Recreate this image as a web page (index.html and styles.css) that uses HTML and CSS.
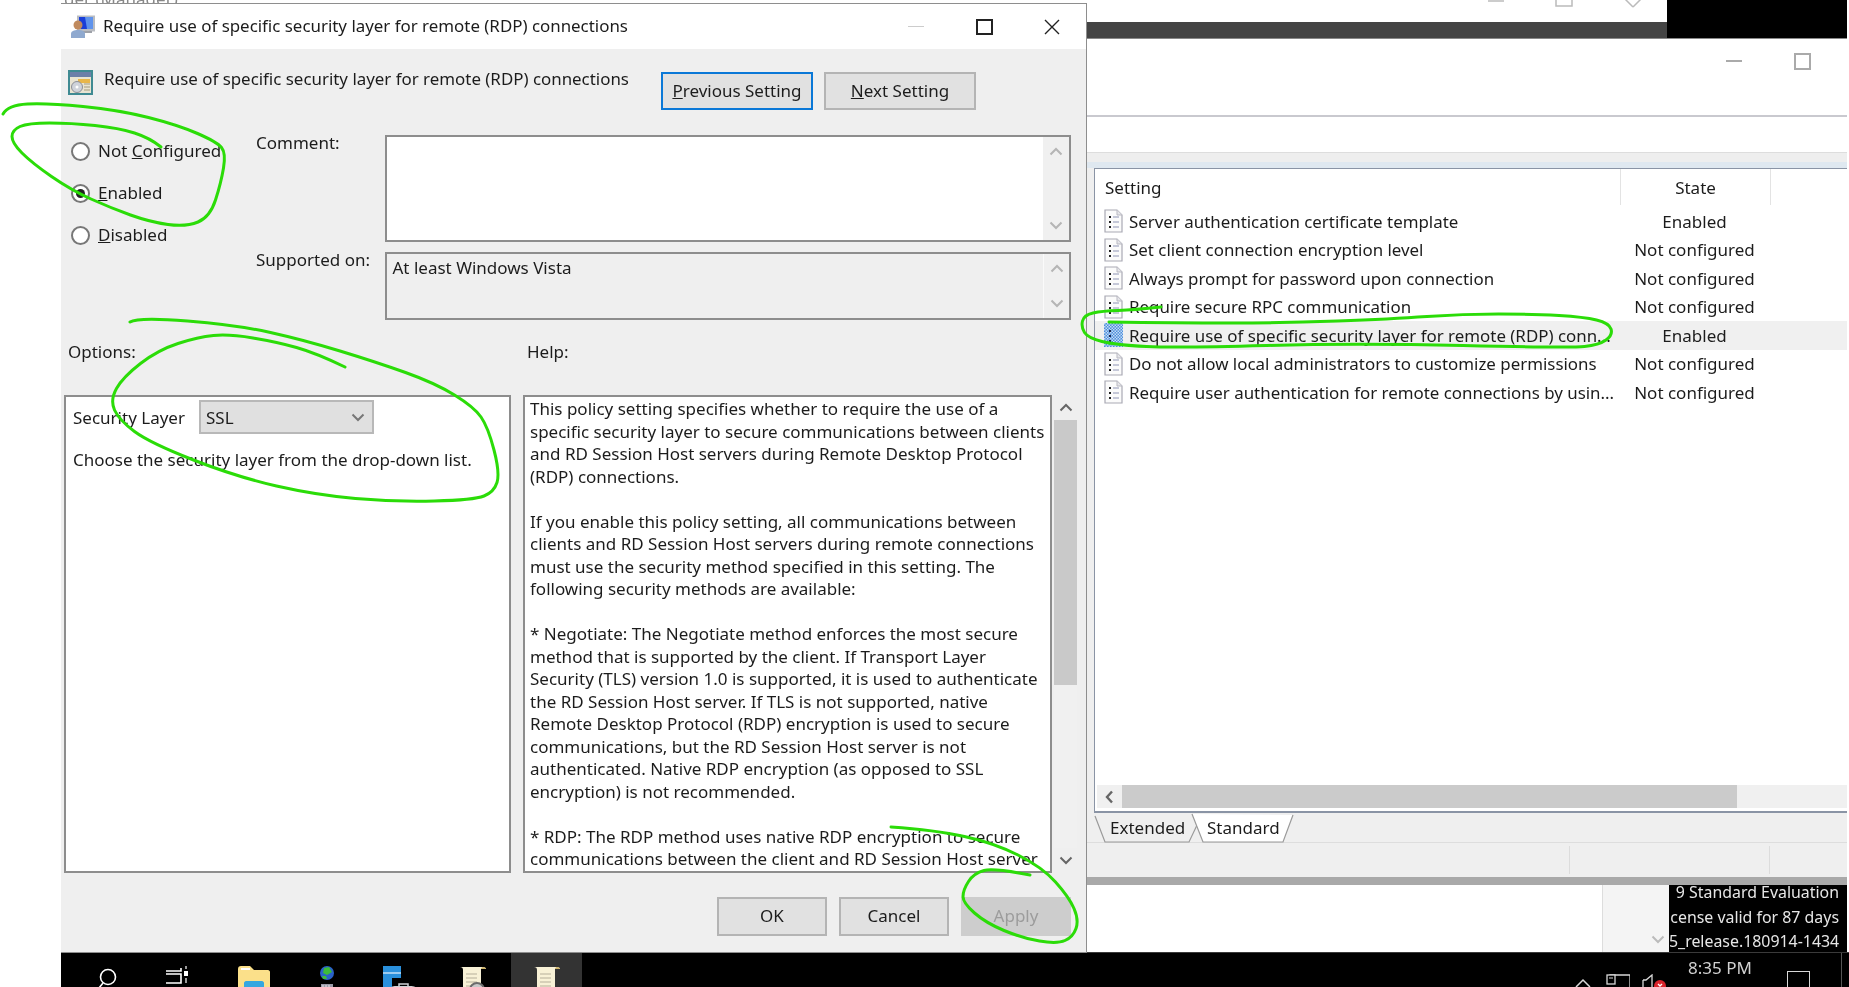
FILE: index.html
```html
<!DOCTYPE html>
<html lang="en">

<head>
    <meta charset="UTF-8">
    <title>Require use of specific security layer for remote (RDP) connections</title>
    <link rel="stylesheet" href="styles.css">
</head>

<body>
    <svg class="defs" width="0" height="0">
        <defs>
            <pattern id="dither" width="3" height="3" patternUnits="userSpaceOnUse">
                <rect width="3" height="3" fill="#4d8fdc"/>
                <rect width="1.5" height="1.5" fill="#c4dbf5"/>
                <rect x="1.5" y="1.5" width="1.5" height="1.5" fill="#c4dbf5"/>
            </pattern>
            <symbol id="doc" viewBox="0 0 19 24">
                <path d="M1 1H13L18 6V23H1Z" fill="#fbfbfb" stroke="#a9a9b4" stroke-width="1.2"/>
                <path d="M13 1V6H18" fill="#e6e6ea" stroke="#b9b9c2"/>
                <path d="M5 7h2v2H5zM5 12h2v2H5zM5 17h2v2H5z" fill="#222"/>
                <path d="M9 8h6M9 13h6M9 18h6" stroke="#8f95b5" stroke-width="1.2"/>
            </symbol>
            <symbol id="chev-up" viewBox="0 0 14 9">
                <path d="M1.5 7.5L7 2L12.5 7.5" fill="none" stroke="currentColor" stroke-width="2"/>
            </symbol>
            <symbol id="chev-down" viewBox="0 0 14 9">
                <path d="M1.5 1.5L7 7L12.5 1.5" fill="none" stroke="currentColor" stroke-width="2"/>
            </symbol>
            <symbol id="scroll" viewBox="0 0 28 24">
                <path d="M1 1H24C26 1 27 2 27 3H22V24H4V4C4 2 3 1 1 1Z" fill="#f8f1d6"/>
                <path d="M24 1C26 1 27 2 27 3H22C22 2 23 1 24 1Z" fill="#cdb36a"/>
                <path d="M7 8H18M7 12H18M7 16H18M7 20H18" stroke="#b5b09a" stroke-width="1.2"/>
            </symbol>
        </defs>
    </svg>

    <div class="desktop">
        <div class="old-title">ger (Manager)</div>

        <div class="back-window">
            <div class="back-caption">
                <svg class="back-glyph" width="170" height="22" viewBox="0 0 170 22">
                    <path d="M0 1H16" stroke="#bbb" stroke-width="1.5"/>
                    <path d="M68 -6H84V6H68Z" fill="none" stroke="#bbb" stroke-width="1.5"/>
                    <path d="M137 -1L145 7M153 -1L145 7" fill="none" stroke="#bbb" stroke-width="1.5"/>
                </svg>
            </div>
            <div class="back-bar"></div>
        </div>
        <div class="back-black"></div>

        <div class="mmc">
            <div class="mmc-caption">
                <span class="mmc-min"></span>
                <span class="mmc-max"></span>
            </div>
            <div class="mmc-toolbar"></div>
            <div class="mmc-band"></div>
            <div class="mmc-frame">
                <div class="list">
                    <div class="list-head">
                        <div class="col-name">Setting</div>
                        <div class="col-state">State</div>
                    </div>
                    <div class="list-rows">
                        <div class="row">
                            <svg class="row-icon"><use href="#doc"/></svg>
                            <div class="col-text">Server authentication certificate template</div>
                            <div class="col-state">Enabled</div>
                        </div>
                        <div class="row">
                            <svg class="row-icon"><use href="#doc"/></svg>
                            <div class="col-text">Set client connection encryption level</div>
                            <div class="col-state">Not configured</div>
                        </div>
                        <div class="row">
                            <svg class="row-icon"><use href="#doc"/></svg>
                            <div class="col-text">Always prompt for password upon connection</div>
                            <div class="col-state">Not configured</div>
                        </div>
                        <div class="row">
                            <svg class="row-icon"><use href="#doc"/></svg>
                            <div class="col-text">Require secure RPC communication</div>
                            <div class="col-state">Not configured</div>
                        </div>
                        <div class="row row-selected">
                            <svg class="row-icon" viewBox="0 0 19 24">
                                <rect width="19" height="24" fill="url(#dither)"/>
                                <path d="M5 7h2v2H5zM5 12h2v2H5zM5 17h2v2H5z" fill="#1c2a55"/>
                            </svg>
                            <div class="col-text">Require use of specific security layer for remote (RDP) conn...</div>
                            <div class="col-state">Enabled</div>
                        </div>
                        <div class="row">
                            <svg class="row-icon"><use href="#doc"/></svg>
                            <div class="col-text">Do not allow local administrators to customize permissions</div>
                            <div class="col-state">Not configured</div>
                        </div>
                        <div class="row">
                            <svg class="row-icon"><use href="#doc"/></svg>
                            <div class="col-text">Require user authentication for remote connections by usin...</div>
                            <div class="col-state">Not configured</div>
                        </div>
                    </div>
                    <div class="hscroll">
                        <span class="hscroll-left">
                            <svg width="9" height="14" viewBox="0 0 9 14"><path d="M7 1.5L2 7L7 12.5" fill="none" stroke="#666" stroke-width="2.4"/></svg>
                        </span>
                        <span class="hscroll-thumb"></span>
                    </div>
                </div>
            </div>
            <div class="tabs">
                <svg class="tabs-bg" width="210" height="30" viewBox="0 0 210 30">
                    <path d="M8 3L18 29H102L111 10" fill="none" stroke="#9a9a9a" stroke-width="1.2"/>
                    <path d="M105 1L116 29H196L206 2" fill="#fff" stroke="#9a9a9a" stroke-width="1.2"/>
                </svg>
                <span class="tab tab-extended">Extended</span>
                <span class="tab tab-standard">Standard</span>
            </div>
            <div class="status">
                <span class="status-cell status-main"></span>
                <span class="status-cell status-mid"></span>
                <span class="status-cell"></span>
            </div>
        </div>

        <div class="under">
            <div class="under-white"></div>
            <div class="under-strip">
                <svg class="under-chev" width="14" height="9"><use href="#chev-down"/></svg>
            </div>
            <div class="watermark">
                <div class="watermark-first">9 Standard Evaluation</div>
                <div>cense valid for 87 days</div>
                <div>5_release.180914-1434</div>
            </div>
        </div>

        <div class="taskbar">
            <div class="task-slot">
                <svg width="24" height="24" viewBox="0 0 24 24">
                    <circle cx="12" cy="11" r="7.5" fill="none" stroke="#fff" stroke-width="1.6"/>
                    <path d="M7 17L3 22" stroke="#fff" stroke-width="1.6"/>
                </svg>
            </div>
            <div class="task-slot">
                <svg width="30" height="24" viewBox="4 0 30 24">
                    <path d="M3 2V5H19V2M3 8H19V17H3Z" fill="none" stroke="#fff" stroke-width="1.6"/>
                    <rect x="22" y="5" width="4" height="5" fill="#fff"/>
                    <path d="M24 0V3M24 12V17" stroke="#fff" stroke-width="1.2"/>
                </svg>
            </div>
            <div class="task-slot">
                <svg width="32" height="24" viewBox="0 0 32 24">
                    <path d="M0 3C0 1 1 0 3 0H12L16 4H30C31 4 32 5 32 6V24H0Z" fill="#fbe08a"/>
                    <path d="M3 2H12V4H3Z" fill="#fff"/>
                    <path d="M6 17C6 16 7 15 8 15H24C25 15 26 16 26 17V24H6Z" fill="#35a7e0"/>
                </svg>
            </div>
            <div class="task-slot">
                <svg width="24" height="24" viewBox="0 0 24 24">
                    <circle cx="12" cy="7" r="7" fill="#2a62c9"/>
                    <path d="M9 2L14 1L17 6L12 9L8 7ZM7 10L11 10L12 13L8 13Z" fill="#3dbb3a"/>
                    <rect x="6" y="18" width="12" height="6" fill="#9a9aa8"/>
                    <path d="M8 19V22M11 19V22M14 19V22" stroke="#e4e4e8"/>
                </svg>
            </div>
            <div class="task-slot">
                <svg width="36" height="24" viewBox="0 0 36 24">
                    <path d="M1 0H19V12H10V24H1Z" fill="#2a90dc"/>
                    <path d="M1 7H19" stroke="#cfe6f7" stroke-width="1.4"/>
                    <path d="M8 23C8 21 11 20 14 20H28C32 20 35 21 35 24H8Z" fill="#cfd2d6"/>
                    <path d="M17 20V18H26V20" fill="none" stroke="#cfd2d6" stroke-width="1.5"/>
                </svg>
            </div>
            <div class="task-slot">
                <svg width="28" height="24"><use href="#scroll"/></svg>
                <svg class="script-lens" width="18" height="6" viewBox="0 0 18 6">
                    <circle cx="9" cy="9" r="7" fill="#c9c9c9" stroke="#6c6c6c" stroke-width="2"/>
                </svg>
            </div>
            <div class="task-slot task-active">
                <svg width="28" height="24"><use href="#scroll"/></svg>
            </div>
            <div class="tray">
                <div class="tray-slot tray-chevron">
                    <svg width="16" height="10" viewBox="0 0 16 10"><path d="M1 9L8 2L15 9" fill="none" stroke="#d8d8d8" stroke-width="1.5"/></svg>
                </div>
                <div class="tray-slot tray-net">
                    <svg width="24" height="14" viewBox="0 0 24 14">
                        <path d="M4 5V1H24V14H6" fill="none" stroke="#d8d8d8" stroke-width="1.3"/>
                        <rect x="1" y="1" width="8" height="9" fill="#000" stroke="#d8d8d8" stroke-width="1.3"/>
                        <path d="M3 4H7" stroke="#d8d8d8"/>
                    </svg>
                </div>
                <div class="tray-slot tray-sound">
                    <svg width="26" height="14" viewBox="0 0 26 14">
                        <path d="M2 6H5L11 1V14" fill="none" stroke="#d8d8d8" stroke-width="1.3"/>
                        <path d="M2 6V14" stroke="#d8d8d8" stroke-width="1.3"/>
                        <circle cx="19" cy="12" r="6" fill="#d9232b"/>
                        <path d="M17 10L21 14M21 10L17 14" stroke="#fff" stroke-width="1.4"/>
                    </svg>
                </div>
                <div class="tray-clock">8:35 PM</div>
                <div class="tray-slot tray-notify"><span class="notify-box"></span></div>
                <div class="tray-edge"></div>
            </div>
        </div>

        <div class="dialog">
            <div class="titlebar">
                <svg class="title-icon" width="24" height="23" viewBox="0 0 24 23">
                    <rect x="6" y="0.5" width="18" height="16" fill="#b9bcc2"/>
                    <rect x="8" y="2" width="14" height="12" fill="#1a3ed8"/>
                    <path d="M14 2H22V14H16Z" fill="#5f93ec"/>
                    <rect x="11" y="16" width="10" height="2" fill="#9ea1a8"/>
                    <circle cx="7" cy="10" r="4.5" fill="#c08a5e"/>
                    <path d="M0 23V19C0 16 3 15 7 15C11 15 14 16 14 19V23Z" fill="#8fa9cf"/>
                </svg>
                <span class="title-text">Require use of specific security layer for remote (RDP) connections</span>
                <div class="caption-btns">
                    <span class="cap-btn"><span class="cap-min"></span></span>
                    <span class="cap-btn"><span class="cap-max"></span></span>
                    <span class="cap-btn">
                        <svg width="16" height="16" viewBox="0 0 16 16"><path d="M1 1L15 15M15 1L1 15" stroke="#222" stroke-width="1.4"/></svg>
                    </span>
                </div>
            </div>

            <div class="dlg-head">
                <svg class="policy-icon" width="25" height="25" viewBox="0 0 25 25">
                    <rect width="25" height="25" fill="#3f8a92"/>
                    <rect x="2" y="2" width="21" height="21" fill="#e9e4d2"/>
                    <rect x="2" y="2" width="21" height="5" fill="#6c7fa8"/>
                    <path d="M10 9H22V13H10Z" fill="#e8b64a"/>
                    <circle cx="9" cy="17" r="5.5" fill="#cfd3da" stroke="#8c8f96"/>
                    <circle cx="9" cy="17" r="1.5" fill="#fff"/>
                    <path d="M16 14H22M16 17H22M16 20H22" stroke="#a49b7c"/>
                </svg>
                <span class="head-text">Require use of specific security layer for remote (RDP) connections</span>
                <div class="nav-btns">
                    <span class="btn btn-nav btn-focus"><u>P</u>revious Setting</span>
                    <span class="btn btn-nav"><u>N</u>ext Setting</span>
                </div>
            </div>

            <div class="settings">
                <div class="radios">
                    <div class="radio-row"><span class="radio"></span><span>Not <u>C</u>onfigured</span></div>
                    <div class="radio-row"><span class="radio radio-on"></span><span><u>E</u>nabled</span></div>
                    <div class="radio-row"><span class="radio"></span><span><u>D</u>isabled</span></div>
                </div>
                <div class="field-label">Comment:</div>
                <div class="box box-comment">
                    <div class="box-text"></div>
                    <div class="box-scroll">
                        <svg width="14" height="9"><use href="#chev-up"/></svg>
                        <svg width="14" height="9"><use href="#chev-down"/></svg>
                    </div>
                </div>
                <div class="field-label">Supported on:</div>
                <div class="box box-supported">
                    <div class="box-text">At least Windows Vista</div>
                    <div class="box-scroll">
                        <svg width="14" height="9"><use href="#chev-up"/></svg>
                        <svg width="14" height="9"><use href="#chev-down"/></svg>
                    </div>
                </div>
            </div>

            <div class="panel-labels">
                <span class="label-options">Options:</span>
                <span class="label-help">Help:</span>
            </div>

            <div class="panels">
                <div class="options">
                    <div class="option-row">
                        <span class="option-label">Security Layer</span>
                        <span class="combo">
                            <span>SSL</span>
                            <svg width="14" height="9"><use href="#chev-down"/></svg>
                        </span>
                    </div>
                    <div class="option-note">Choose the security layer from the drop-down list.</div>
                </div>
                <div class="help">
                    This policy setting specifies whether to require the use of a<br>
                    specific security layer to secure communications between clients<br>
                    and RD Session Host servers during Remote Desktop Protocol<br>
                    (RDP) connections.<br>
                    <br>
                    If you enable this policy setting, all communications between<br>
                    clients and RD Session Host servers during remote connections<br>
                    must use the security method specified in this setting. The<br>
                    following security methods are available:<br>
                    <br>
                    * Negotiate: The Negotiate method enforces the most secure<br>
                    method that is supported by the client. If Transport Layer<br>
                    Security (TLS) version 1.0 is supported, it is used to authenticate<br>
                    the RD Session Host server. If TLS is not supported, native<br>
                    Remote Desktop Protocol (RDP) encryption is used to secure<br>
                    communications, but the RD Session Host server is not<br>
                    authenticated. Native RDP encryption (as opposed to SSL<br>
                    encryption) is not recommended.<br>
                    <br>
                    * RDP: The RDP method uses native RDP encryption to secure<br>
                    communications between the client and RD Session Host server
                </div>
                <div class="help-scroll">
                    <span class="help-arrow"><svg width="14" height="9"><use href="#chev-up"/></svg></span>
                    <span class="help-thumb"></span>
                    <span class="help-track"></span>
                    <span class="help-arrow"><svg width="14" height="9"><use href="#chev-down"/></svg></span>
                </div>
            </div>

            <div class="dlg-foot">
                <span class="btn btn-foot">OK</span>
                <span class="btn btn-foot">Cancel</span>
                <span class="btn btn-foot btn-disabled">Apply</span>
            </div>
        </div>

        <!-- green pen marks over the screenshot -->
        <svg class="ink" width="1849" height="987" viewBox="0 0 1849 987">
            <path d="M3,114 Q8,105 27.5,104 Q47,103 83,106.5 Q119,110 148.5,117.5 Q178,125 197.5,133.5 Q217,142 221.5,147.5 Q226,153 223.5,168 Q221,183 215.5,200 Q210,217 198,222 Q186,227 168,224.5 Q150,222 130.5,215 Q111,208 91,199 Q71,190 51.5,176.5 Q32,163 22,153 Q12,143 12,136.5 Q12,130 20,126.5 Q28,123 49.5,123 Q71,123 95,125.5 Q119,128 134.5,133 Q150,138 161,147"/>
            <path d="M130,322 Q138,317 187.5,321 Q237,325 270.5,332.5 Q304,340 340,351 Q376,362 405.5,372.5 Q435,383 454.5,395 Q474,407 481,417 Q488,427 494,450 Q500,473 497,482.5 Q494,492 484,496 Q474,500 434.5,501 Q395,502 355.5,498.5 Q316,495 276.5,486 Q237,477 193.5,460 Q150,443 134.5,431.5 Q119,420 114.5,410 Q110,400 116.5,388.5 Q123,377 140.5,363.5 Q158,350 178,343.5 Q198,337 213.5,335.5 Q229,334 253,338 Q277,342 296.5,347.5 Q316,353 345,367"/>
            <path d="M1161,307 Q1134,310 1118,310.5 Q1102,311 1093,313 Q1084,315 1082.5,321 Q1081,327 1084.5,332.5 Q1088,338 1102,341.5 Q1116,345 1146.5,346.5 Q1177,348 1266.5,345.5 Q1356,343 1463,345.5 Q1570,348 1584.5,346.5 Q1599,345 1606,340 Q1613,335 1611,329 Q1609,323 1596.5,320 Q1584,317 1559,315.5 Q1534,314 1498.5,314 Q1463,314 1427,316.5 Q1391,319 1337.5,321 Q1284,323 1230.5,323 Q1177,323 1109,322"/>
            <path d="M891,827 Q935,830 964.5,836.5 Q994,843 1018,855 Q1042,867 1055.5,882 Q1069,897 1074,908.5 Q1079,920 1076,928.5 Q1073,937 1065,940.5 Q1057,944 1039.5,941 Q1022,938 1004,930.5 Q986,923 974.5,913 Q963,903 963,896.5 Q963,890 968.5,881.5 Q974,873 984,870.5 Q994,868 1030,875"/>
        </svg>
    </div>
</body>

</html>
```

FILE: styles.css
```css
html,
body {
    margin: 0;
    padding: 0;
    background: #fff;
}

.defs {
    position: absolute;
}

.desktop {
    position: relative;
    width: 1849px;
    height: 987px;
    overflow: hidden;
    background: #fff;
    font-family: "Noto Sans", sans-serif;
    font-size: 17px;
    color: #1c1c1c;
    filter: blur(0.5px);
}

.old-title {
    position: absolute;
    left: 64px;
    top: -13px;
    font-size: 17px;
    color: #888;
}

/* windows behind the dialog */
.back-window {
    position: absolute;
    left: 1087px;
    top: 0;
    width: 580px;
}

.back-caption {
    height: 22px;
    background: #fff;
    display: flex;
    justify-content: flex-end;
    padding-right: 9px;
}

.back-bar {
    height: 16px;
    background: #444;
}

.back-black {
    position: absolute;
    left: 1667px;
    top: 0;
    width: 180px;
    height: 38px;
    background: #000;
}

.mmc {
    position: absolute;
    left: 1086px;
    top: 38px;
    width: 761px;
    height: 847px;
    box-sizing: border-box;
    border-top: 1px solid #888;
    border-left: 1px solid #888;
    display: flex;
    flex-direction: column;
    background: #fff;
}

.mmc-caption {
    height: 78px;
    box-sizing: border-box;
    border-bottom: 2px solid #c9c9cf;
    display: flex;
    justify-content: flex-end;
    align-items: flex-start;
    gap: 52px;
    padding: 14px 36px 0 0;
}

.mmc-min {
    width: 16px;
    height: 2px;
    margin-top: 7px;
    background: #aaa;
}

.mmc-max {
    width: 13px;
    height: 13px;
    border: 2px solid #aaa;
}

.mmc-toolbar {
    height: 35px;
}

.mmc-band {
    height: 16px;
    box-sizing: border-box;
    background: linear-gradient(#eee 60%, #dfe8f0 60%);
    border-top: 1px solid #ddd;
}

.mmc-frame {
    flex: 1;
    display: flex;
    background: #efefef;
    padding-left: 7px;
    min-height: 0;
}

.list {
    flex: 1;
    background: #fff;
    border-top: 1px solid #8a94a5;
    border-left: 1px solid #8a94a5;
    border-bottom: 2px solid #8a94a5;
    display: flex;
    flex-direction: column;
}

.list-head {
    height: 37px;
    display: flex;
    align-items: center;
    padding-bottom: 1px;
    box-sizing: border-box;
}

.col-name {
    width: 525px;
    box-sizing: border-box;
    padding-left: 10px;
    height: 36px;
    line-height: 38px;
}

.list-head .col-state {
    height: 36px;
    line-height: 38px;
    border-left: 1px solid #e3e3e3;
    border-right: 1px solid #e3e3e3;
}

.col-state {
    width: 149px;
    text-align: center;
}

.list-rows {
    flex: 1;
    padding-top: 1px;
}

.row {
    height: 28.5px;
    display: flex;
    align-items: center;
    white-space: nowrap;
}

.row-selected {
    background: #f0f0f0;
}

.row-icon {
    width: 19px;
    height: 24px;
    margin-left: 9px;
    margin-right: 6px;
    flex: none;
}

.col-text {
    width: 491px;
    flex: none;
    overflow: hidden;
    font-size: 16.9px;
}

.hscroll {
    height: 23px;
    display: flex;
    margin-bottom: 3px;
    background: #f0f0f0;
    margin-left: 2px;
}

.hscroll-left {
    width: 25px;
    display: flex;
    align-items: center;
    justify-content: center;
}

.hscroll-thumb {
    width: 615px;
    background: #cbcbcb;
}

.tabs {
    position: relative;
    height: 30px;
    box-sizing: border-box;
    background: #efefef;
    border-bottom: 1px solid #ddd;
    display: flex;
    align-items: center;
    padding-left: 23px;
}

.tabs-bg {
    position: absolute;
    left: 0;
    top: 0;
}

.tab {
    position: relative;
}

.tab-extended {
    width: 97px;
}

.status {
    height: 34px;
    background: #efefef;
    display: flex;
    padding: 3px 0;
    box-sizing: border-box;
}

.status-cell {
    flex: 1;
    border-left: 1px solid #dcdcdc;
}

.status-main {
    flex: none;
    width: 482px;
    border-left: none;
}

.status-mid {
    flex: none;
    width: 199px;
}

.mmc::after {
    content: "";
    height: 8px;
    background: #a9a9a9;
}

.under {
    position: absolute;
    left: 1087px;
    top: 885px;
    width: 760px;
    height: 67px;
    display: flex;
}

.under-white {
    flex: 1;
}

.under-strip {
    width: 67px;
    box-sizing: border-box;
    background: #f4f4f4;
    border-left: 1px solid #ddd;
    display: flex;
    justify-content: flex-end;
    align-items: flex-end;
    padding: 0 4px 8px 0;
    color: #bbb;
}

.watermark {
    width: 178px;
    height: 67px;
    box-sizing: border-box;
    background: #000;
    color: #e6e6e6;
    font-size: 15.9px;
    line-height: 24.5px;
    text-align: right;
    white-space: nowrap;
    padding-right: 8px;
}

.watermark-first {
    margin-top: -5px;
}

.taskbar {
    position: absolute;
    left: 61px;
    top: 952px;
    right: 0;
    height: 35px;
    background: #000;
    border-top: 1px solid #3a3a3a;
    box-sizing: border-box;
    display: flex;
    padding-left: 10px;
}

.task-slot {
    position: relative;
    width: 73px;
    height: 100%;
    display: flex;
    justify-content: center;
    padding-top: 13px;
    box-sizing: border-box;
}

.task-active {
    background: #333;
    width: 71px;
    margin-left: 2px;
}

.script-lens {
    position: absolute;
    left: 32px;
    bottom: 0;
}

.tray {
    margin-left: auto;
    display: flex;
    color: #d0d0d0;
}

.tray-slot {
    display: flex;
    justify-content: center;
    padding-top: 21px;
    box-sizing: border-box;
}

.tray-chevron {
    width: 35px;
    padding-top: 25px;
}

.tray-net {
    width: 36px;
}

.tray-sound {
    width: 36px;
}

.tray-clock {
    width: 96px;
    text-align: center;
    font-size: 17px;
    line-height: 30px;
}

.tray-notify {
    width: 60px;
    padding-top: 18px;
}

.notify-box {
    width: 21px;
    height: 30px;
    border: 1.5px solid #d8d8d8;
}

.tray-edge {
    width: 1px;
    margin-left: 13px;
    margin-right: 7px;
    background: #555;
}

/* the policy dialog */
.dialog {
    position: absolute;
    left: 61px;
    top: 3px;
    width: 1026px;
    height: 950px;
    box-sizing: border-box;
    border: 1px solid #8e8e8e;
    border-left: none;
    background: #efefef;
    display: flex;
    flex-direction: column;
}

.titlebar {
    height: 45px;
    flex: none;
    background: #fff;
    display: flex;
    align-items: center;
    padding-left: 10px;
}

.title-icon {
    margin-right: 8px;
}

.title-text {
    font-size: 16.9px;
    margin-top: -2px;
}

.caption-btns {
    margin-left: auto;
    display: flex;
}

.cap-btn {
    width: 68px;
    display: flex;
    justify-content: center;
    align-items: center;
    height: 30px;
}

.cap-min {
    width: 16px;
    height: 1.5px;
    background: #ccc;
}

.cap-max {
    width: 13px;
    height: 12px;
    border: 2px solid #222;
}

.dlg-head {
    height: 86px;
    flex: none;
    box-sizing: border-box;
    padding: 21px 110px 0 7px;
    display: flex;
    align-items: flex-start;
}

.policy-icon {
    margin-right: 11px;
}

.head-text {
    font-size: 16.9px;
    line-height: 17px;
}

.nav-btns {
    margin-left: auto;
    margin-top: 2px;
    display: flex;
    gap: 11px;
}

.btn {
    box-sizing: border-box;
    border: 2px solid #b4b4b4;
    background: #e1e1e1;
    display: flex;
    align-items: center;
    justify-content: center;
    padding-bottom: 2px;
}

.btn-nav {
    width: 152px;
    height: 38px;
}

.btn-focus {
    border-color: #0a78d7;
}

.settings {
    height: 185px;
    flex: none;
    box-sizing: border-box;
    padding-right: 15px;
    display: grid;
    grid-template-columns: 195px 128.5px 1fr;
    grid-template-rows: 107px 68px;
    row-gap: 10px;
}

.radios {
    grid-row: 1 / 3;
    display: flex;
    flex-direction: column;
    gap: 22px;
    padding: 6px 0 0 10px;
}

.radio-row {
    height: 20px;
    line-height: 20px;
    display: flex;
    align-items: center;
    gap: 8px;
    white-space: nowrap;
}

.radio {
    width: 19px;
    height: 19px;
    box-sizing: border-box;
    border: 2px solid #777;
    border-radius: 50%;
    background: #fff;
    display: flex;
    align-items: center;
    justify-content: center;
}

.radio-on::after {
    content: "";
    width: 9px;
    height: 9px;
    border-radius: 50%;
    background: #222;
}

.field-label {
    line-height: 16px;
}

.box {
    box-sizing: border-box;
    border: 2px solid #8d8d8d;
    display: flex;
}

.box-comment {
    background: #fff;
}

.box-supported {
    background: #efefef;
}

.box-text {
    flex: 1;
    padding: 5px 0 0 6px;
    line-height: 18px;
}

.box-scroll {
    width: 26px;
    box-sizing: border-box;
    background: #f0f0f0;
    display: flex;
    flex-direction: column;
    align-items: center;
    justify-content: space-between;
    padding: 10px 0;
    color: #b5b5b5;
}

.box-supported .box-scroll {
    border-left: 1px solid #fafafa;
}

.panel-labels {
    height: 75px;
    flex: none;
    box-sizing: border-box;
    padding: 23px 0 0 7px;
    display: flex;
    line-height: 18px;
}

.label-options {
    width: 459px;
}

.panels {
    height: 478px;
    flex: none;
    box-sizing: border-box;
    padding-left: 3px;
    display: flex;
}

.options {
    width: 447px;
    box-sizing: border-box;
    border: 2px solid #8d8d8d;
    background: #fff;
    padding: 3px 0 0 7px;
    margin-right: 12px;
}

.option-row {
    display: flex;
    align-items: center;
}

.option-label {
    width: 126px;
}

.combo {
    width: 175px;
    height: 34px;
    box-sizing: border-box;
    border: 2px solid #b8b8b8;
    background: #e0e0e0;
    display: flex;
    align-items: center;
    justify-content: space-between;
    padding: 0 7px 0 5px;
    color: #1c1c1c;
}

.combo svg {
    color: #777;
}

.option-note {
    margin-top: 17px;
    line-height: 18px;
    white-space: nowrap;
}

.help {
    width: 529px;
    box-sizing: border-box;
    border: 2px solid #8d8d8d;
    background: #fff;
    padding: 1px 0 0 5px;
    line-height: 22.5px;
    white-space: nowrap;
    overflow: hidden;
}

.help-scroll {
    width: 23px;
    margin-left: 2px;
    display: flex;
    flex-direction: column;
    color: #666;
}

.help-arrow {
    height: 25px;
    display: flex;
    justify-content: center;
    align-items: center;
}

.help-thumb {
    height: 265px;
    background: #c9c9c9;
}

.help-track {
    flex: 1;
    background: #f0f0f0;
}

.dlg-foot {
    flex: 1;
    display: flex;
    justify-content: flex-end;
    align-items: flex-start;
    gap: 12px;
    padding: 24px 15px 0 0;
}

.btn-foot {
    width: 110px;
    height: 39px;
}

.btn-disabled {
    background: #cdcdcd;
    border-color: #cdcdcd;
    color: #9c9c9c;
}

.ink {
    position: absolute;
    left: 0;
    top: 0;
    pointer-events: none;
}

.ink path {
    fill: none;
    stroke: #2bdc08;
    stroke-width: 3;
    stroke-linecap: round;
    stroke-linejoin: round;
}
```
